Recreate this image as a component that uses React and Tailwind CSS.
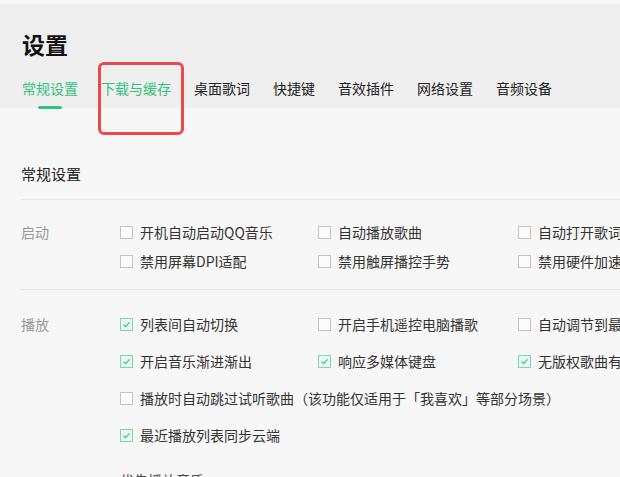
import React from "react";

const tabs = ["常规设置", "下载与缓存", "桌面歌词", "快捷键", "音效插件", "网络设置", "音频设备"];

function CheckBox({ checked }) {
  if (checked) {
    return (
      <span className="w-[13px] h-[13px] shrink-0 border border-[#7fd8ad] bg-[#e9f8f0] flex items-center justify-center">
        <svg width="9" height="9" viewBox="0 0 9 9" fill="none">
          <path d="M1.5 4.6 L3.6 6.6 L7.5 2.4" stroke="#31c27c" strokeWidth="1.1" />
        </svg>
      </span>
    );
  }
  return <span className="w-[13px] h-[13px] shrink-0 border border-[#c4c4c4] bg-[#fbfbfb]" />;
}

function Option({ text, checked, wide }) {
  return (
    <div className={"flex items-center gap-[7px] whitespace-nowrap " + (wide ? "col-span-3" : "")}>
      <CheckBox checked={checked} />
      <span className="text-[14px] text-[#333]">{text}</span>
    </div>
  );
}

export default function App() {
  return (
    <div className="relative w-[620px] h-[477px] overflow-hidden bg-[#f7f7f7] font-['Noto_Sans_CJK_SC','Noto_Sans',sans-serif]">
      <div className="h-[4px]" />
      <div className="h-[104px] bg-[#efefef] px-[22px] pt-[28px]">
        <h1 className="text-[23px] leading-[25px] font-bold text-[#111]">设置</h1>
        <div className="mt-[21px] flex gap-[23px] whitespace-nowrap">
          {tabs.map((t, i) => (
            <div key={t} className="flex flex-col items-center">
              <span className={"text-[14px] leading-[20px] " + (i === 0 || i === 1 ? "text-[#31c27c]" : "text-[#222]")}>
                {t}
              </span>
              {i === 0 && <span className="mt-[8px] w-[24px] h-[3px] rounded-full bg-[#31c27c]" />}
            </div>
          ))}
        </div>
      </div>

      <div className="pl-[21px]">
        <h2 className="mt-[55px] text-[15px] leading-[22px] text-[#222]">常规设置</h2>
        <div className="mt-[14px] border-t border-[#e6e6e6]" />

        <div className="flex pt-[18px] pb-[13px]">
          <div className="w-[99px] shrink-0 text-[14px] leading-[29px] text-[#999]">启动</div>
          <div className="grid grid-cols-[198px_200px_200px] auto-rows-[29px]">
            <Option text="开机自动启动QQ音乐" />
            <Option text="自动播放歌曲" />
            <Option text="自动打开歌词" />
            <Option text="禁用屏幕DPI适配" />
            <Option text="禁用触屏播控手势" />
            <Option text="禁用硬件加速" />
          </div>
        </div>
        <div className="border-t border-[#e6e6e6]" />

        <div className="flex pt-[16px]">
          <div className="w-[99px] shrink-0 text-[14px] leading-[37px] text-[#999]">播放</div>
          <div className="grid grid-cols-[198px_200px_200px] auto-rows-[37px]">
            <Option text="列表间自动切换" checked />
            <Option text="开启手机遥控电脑播歌" />
            <Option text="自动调节到最佳音量" />
            <Option text="开启音乐渐进渐出" checked />
            <Option text="响应多媒体键盘" checked />
            <Option text="无版权歌曲有相似版本时提示" checked />
            <Option text="播放时自动跳过试听歌曲（该功能仅适用于「我喜欢」等部分场景）" wide />
            <Option text="最近播放列表同步云端" checked wide />
            <div className="col-span-3 pt-[16px] text-[14px] text-[#444]">优先播放音质</div>
          </div>
        </div>
      </div>

      <div className="absolute left-[98px] top-[62px] w-[86px] h-[73px] border-[3px] border-[#ea4a4a] rounded-[6px]" />
    </div>
  );
}
